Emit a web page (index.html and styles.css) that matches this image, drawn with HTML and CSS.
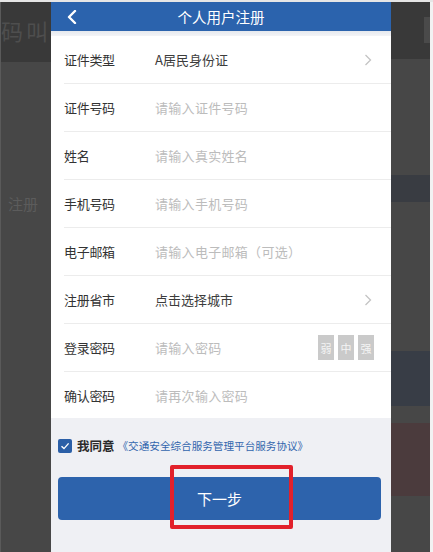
FILE: index.html
```html
<!DOCTYPE html>
<html>
  <head>
    <title>个人用户注册</title>
    <meta charset="UTF-8">
    <link rel="stylesheet" href="styles.css">
  </head>
  <body>
    <div class="screen">
      <div class="topline"></div>
      <div class="stage">
        <div class="side side-left">
          <div class="band band-dark"><span class="ghost-big">码 叫</span></div>
          <div class="band band-rest"><span class="ghost-small">注册</span></div>
        </div>

        <div class="phone">
          <div class="header">
            <svg class="back" width="12" height="14" viewBox="0 0 12 14">
              <path d="M9 1 L3 7 L9 13" fill="none" stroke="#fff" stroke-width="2.4" stroke-linecap="round" stroke-linejoin="round"/>
            </svg>
            <div class="title">个人用户注册</div>
          </div>
          <div class="header-gap"></div>

          <div class="form">
            <div class="row">
              <span class="label">证件类型</span>
              <span class="value">A居民身份证</span>
              <svg class="arrow" width="8" height="12" viewBox="0 0 8 12"><path d="M1.5 1 L6.5 6 L1.5 11" fill="none" stroke="#c4c4c4" stroke-width="1.3"/></svg>
            </div>
            <div class="row">
              <span class="label">证件号码</span>
              <span class="value hint">请输入证件号码</span>
            </div>
            <div class="row">
              <span class="label">姓名</span>
              <span class="value hint">请输入真实姓名</span>
            </div>
            <div class="row">
              <span class="label">手机号码</span>
              <span class="value hint">请输入手机号码</span>
            </div>
            <div class="row">
              <span class="label">电子邮箱</span>
              <span class="value hint">请输入电子邮箱（可选）</span>
            </div>
            <div class="row">
              <span class="label">注册省市</span>
              <span class="value">点击选择城市</span>
              <svg class="arrow" width="8" height="12" viewBox="0 0 8 12"><path d="M1.5 1 L6.5 6 L1.5 11" fill="none" stroke="#c4c4c4" stroke-width="1.3"/></svg>
            </div>
            <div class="row">
              <span class="label">登录密码</span>
              <span class="value hint">请输入密码</span>
              <div class="strength">
                <span>弱</span><span>中</span><span>强</span>
              </div>
            </div>
            <div class="row row-last">
              <span class="label">确认密码</span>
              <span class="value hint">请再次输入密码</span>
            </div>
          </div>

          <div class="footer">
            <div class="agree">
              <span class="check">
                <svg width="10" height="10" viewBox="0 0 10 10"><path d="M1.5 5.2 L4 7.6 L8.6 2.4" fill="none" stroke="#fff" stroke-width="1.4"/></svg>
              </span>
              <span class="agree-text">我同意</span>
              <span class="agree-link">《交通安全综合服务管理平台服务协议》</span>
            </div>
            <div class="next">下一步</div>
          </div>
        </div>

        <div class="side side-right">
          <div class="band band-dark r1"><span class="ghost-box"></span></div>
          <div class="band r2"></div>
          <div class="band r3"></div>
          <div class="band r4"></div>
          <div class="band r5"></div>
          <div class="band r6"></div>
          <div class="band r7"></div>
          <div class="band r8"></div>
        </div>
        <div class="edge"></div>
      </div>

      <div class="highlight"></div>
    </div>
  </body>
</html>
```

FILE: styles.css
```css
body {
  margin: 0;
  padding: 0;
  background-color: #474747;
  font-family: "Noto Sans CJK SC", "Noto Sans", sans-serif;
}

.screen {
  position: relative;
  width: 433px;
  height: 552px;
  overflow: hidden;
  display: flex;
  flex-direction: column;
}

.topline {
  height: 2px;
  background-color: #e6e6e6;
}

.stage {
  flex: 1;
  display: flex;
}

/* dimmed page behind the phone */
.side {
  display: flex;
  flex-direction: column;
}

.side-left {
  width: 51px;
  border-left: 1px solid #5a5a5a;
  box-sizing: border-box;
}

.side-right {
  width: 39px;
}

.band {
  background-color: #474747;
}

.band-dark {
  background-color: #393939;
}

.side-left .band-dark {
  height: 60px;
}

.ghost-big {
  display: block;
  margin-top: 15px;
  font-size: 22px;
  line-height: 26px;
  color: #4e4e4e;
  white-space: nowrap;
  letter-spacing: -1px;
}

.band-rest {
  flex: 1;
  padding-top: 132px;
}

.ghost-small {
  display: block;
  margin-left: 7px;
  font-size: 15px;
  line-height: 20px;
  color: #5c5c5c;
}

.r1 { height: 57px; padding-top: 15px; box-sizing: border-box; }
.r2 { height: 116px; }
.r3 { height: 27px; background-color: #393c42; }
.r4 { height: 149px; }
.r5 { height: 55px; background-color: #383d46; }
.r6 { height: 17px; }
.r7 { height: 73px; background-color: #4b3b3d; }
.r8 { flex: 1; }

.ghost-box {
  display: block;
  margin-left: 33px;
  width: 6px;
  height: 26px;
  background-color: #4a4a4a;
}

.edge {
  width: 3px;
  background-color: #f2f2f2;
}

/* phone */
.phone {
  width: 340px;
  display: flex;
  flex-direction: column;
  background-color: #eff0f4;
}

.header {
  height: 29px;
  background-color: #2b63ad;
  display: flex;
  align-items: center;
  position: relative;
}

.back {
  margin-left: 15px;
}

.title {
  position: absolute;
  left: 0;
  right: 0;
  text-align: center;
  font-size: 14.5px;
  color: #fff;
  line-height: 29px;
  pointer-events: none;
}

.header-gap {
  height: 5px;
  background: linear-gradient(#e6e9ee, #f3f4f7);
}

.form {
  background-color: #fff;
  padding-left: 13px;
}

.row {
  height: 47px;
  border-bottom: 1px solid #ececec;
  display: flex;
  align-items: center;
  font-size: 13px;
}

.row-last {
  height: 46px;
  border-bottom: none;
}

.label {
  width: 91px;
  color: #333;
  letter-spacing: -0.3px;
}

.value {
  flex: 1;
  color: #3c3c3c;
}

.hint {
  color: #bcbcbc;
  letter-spacing: 0.3px;
}

.arrow {
  margin-right: 19px;
}

.strength {
  display: flex;
  gap: 4px;
  margin-right: 17px;
}

.strength span {
  width: 16px;
  height: 25px;
  background-color: #cacaca;
  color: #f4f4f4;
  font-size: 11px;
  display: flex;
  align-items: center;
  justify-content: center;
}

.footer {
  flex: 1;
  padding: 20px 10px 0 7px;
}

.agree {
  display: flex;
  align-items: center;
  height: 15px;
}

.check {
  width: 14px;
  height: 14px;
  border-radius: 2px;
  background-color: #2b5fa7;
  display: flex;
  align-items: center;
  justify-content: center;
}

.agree-text {
  margin-left: 5px;
  font-size: 12.5px;
  font-weight: bold;
  color: #2a2a2a;
}

.agree-link {
  margin-left: 3px;
  font-size: 10.6px;
  color: #3266ad;
}

.next {
  margin-top: 24px;
  height: 43px;
  border-radius: 4px;
  background-color: #2d63ac;
  color: #fff;
  font-size: 15px;
  display: flex;
  align-items: center;
  justify-content: center;
}

/* red annotation drawn over the button */
.highlight {
  position: absolute;
  left: 170px;
  top: 465px;
  width: 123px;
  height: 64px;
  border: 4px solid #e2212b;
  border-radius: 2px;
  box-sizing: border-box;
}
```
